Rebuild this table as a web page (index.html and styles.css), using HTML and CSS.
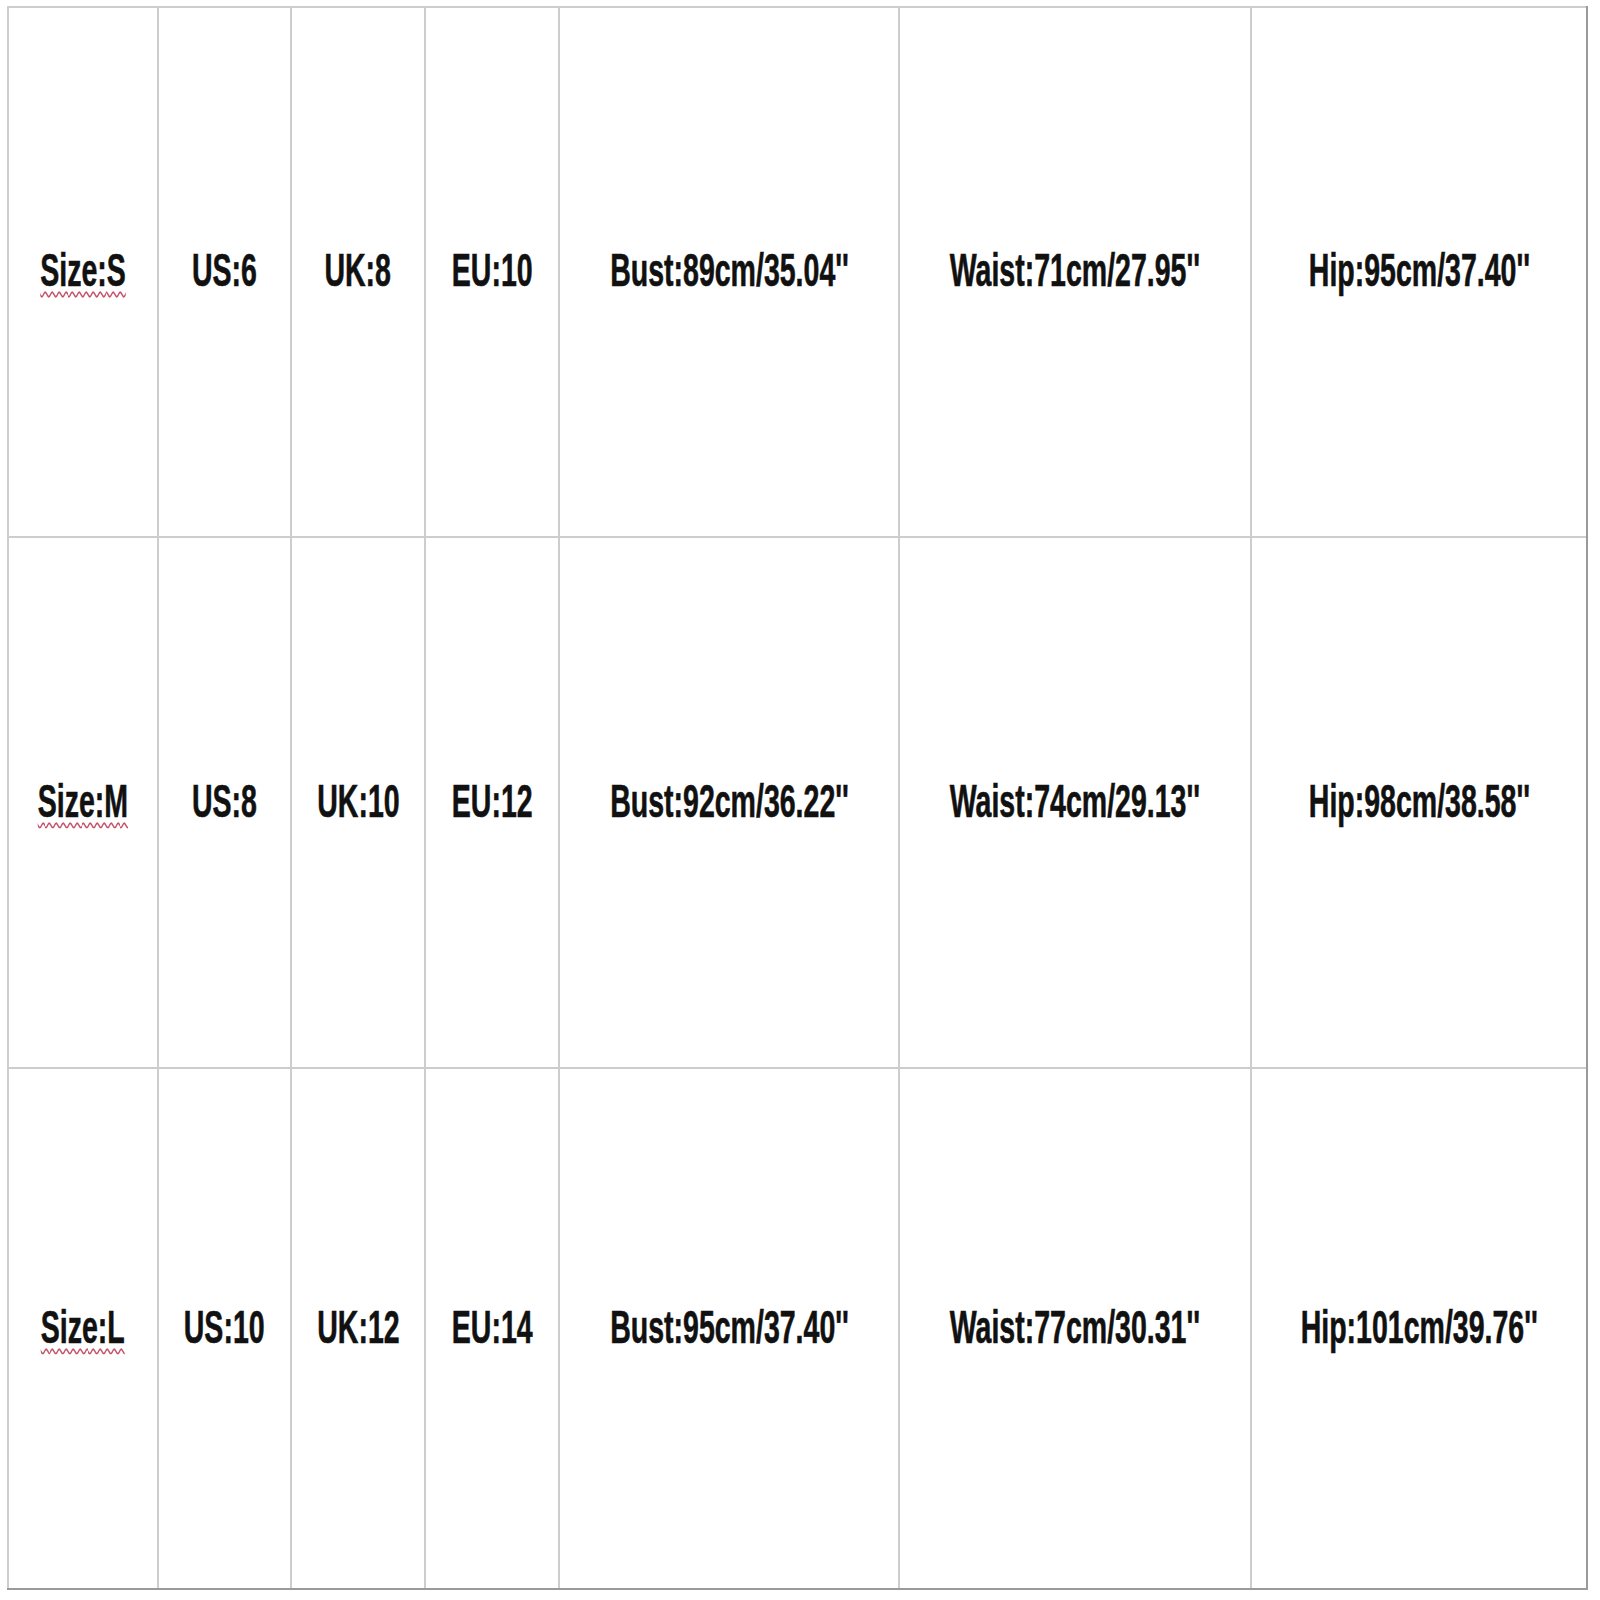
FILE: index.html
```html
<!DOCTYPE html>
<html>
<head>
<meta charset="utf-8">
<link rel="stylesheet" href="styles.css">
</head>
<body>
<div class="chart">
  <div class="cell"><span class="t size">Size:S</span></div>
  <div class="cell"><span class="t">US:6</span></div>
  <div class="cell"><span class="t">UK:8</span></div>
  <div class="cell"><span class="t">EU:10</span></div>
  <div class="cell"><span class="t">Bust:89cm/35.04''</span></div>
  <div class="cell"><span class="t">Waist:71cm/27.95''</span></div>
  <div class="cell"><span class="t">Hip:95cm/37.40''</span></div>

  <div class="cell"><span class="t size">Size:M</span></div>
  <div class="cell"><span class="t">US:8</span></div>
  <div class="cell"><span class="t">UK:10</span></div>
  <div class="cell"><span class="t">EU:12</span></div>
  <div class="cell"><span class="t">Bust:92cm/36.22''</span></div>
  <div class="cell"><span class="t">Waist:74cm/29.13''</span></div>
  <div class="cell"><span class="t">Hip:98cm/38.58''</span></div>

  <div class="cell"><span class="t size">Size:L</span></div>
  <div class="cell"><span class="t">US:10</span></div>
  <div class="cell"><span class="t">UK:12</span></div>
  <div class="cell"><span class="t">EU:14</span></div>
  <div class="cell"><span class="t">Bust:95cm/37.40''</span></div>
  <div class="cell"><span class="t">Waist:77cm/30.31''</span></div>
  <div class="cell"><span class="t">Hip:101cm/39.76''</span></div>
</div>
</body>
</html>
```

FILE: styles.css
```css
html, body {
  margin: 0;
  padding: 0;
  background: #ffffff;
}

.chart {
  display: grid;
  grid-template-columns: 148px 131px 132px 132px 338px 350px 334px;
  grid-template-rows: 528px 529px 519px;
  gap: 2px;
  padding: 2px 0 0 2px;
  border-right: 2px solid #9a9a9a;
  border-bottom: 2px solid #9a9a9a;
  background: #cdcdcd;
  margin: 6px 0 0 7px;
  width: max-content;
}

.cell {
  background: #ffffff;
  display: flex;
  align-items: center;
  justify-content: center;
  overflow: visible;
  white-space: nowrap;
}

.t {
  display: inline-block;
  font-family: "Liberation Sans", Arial, sans-serif;
  font-weight: bold;
  font-size: 46px;
  line-height: 1;
  color: #111111;
  -webkit-text-stroke: 0.6px #111111;
  transform: translateY(-2px) scaleX(0.62);
}

.size {
  text-decoration: underline wavy #c4506a;
  text-decoration-thickness: 2px;
  text-underline-offset: 5px;
}
```
